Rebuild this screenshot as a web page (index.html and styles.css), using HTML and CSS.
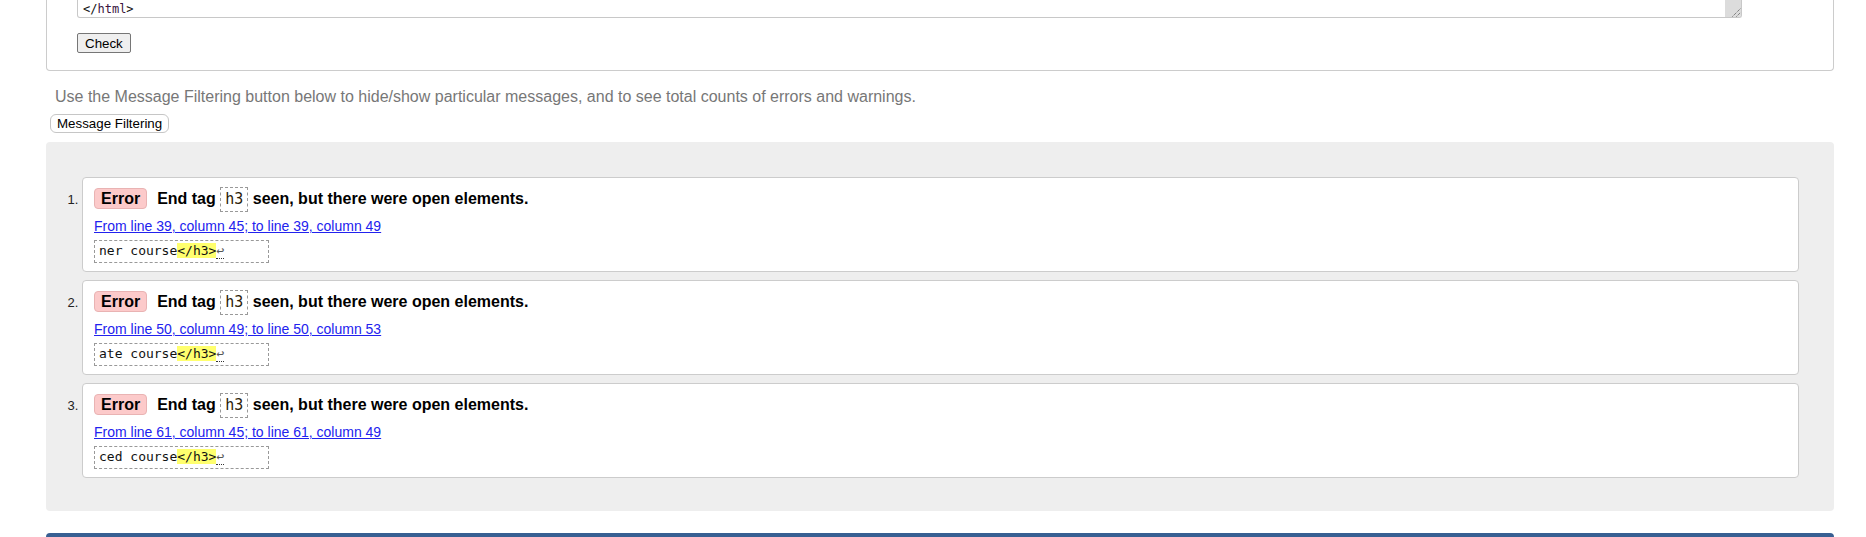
FILE: index.html
```html
<!DOCTYPE html>
<html lang="en">
<head>
<meta charset="utf-8">
<title>Nu Html Checker</title>
<link rel="stylesheet" href="styles.css">
</head>
<body>
<div class="page">
  <form class="check-form">
    <div class="source">
      <div class="source-line"><span class="punct">&lt;/</span><span class="tname">html</span><span class="punct">&gt;</span></div>
      <span class="grip"><svg width="16" height="17" viewBox="0 0 16 17"><path d="M7.5 16.5 L15.5 8.5 M11.5 16.5 L15.5 12.5" stroke="#555" stroke-width="1" stroke-dasharray="1 1" fill="none"/></svg></span>
    </div>
    <div class="submit-row"><button type="button" class="check-btn">Check</button></div>
  </form>
  <p class="hint">Use the Message Filtering button below to hide/show particular messages, and to see total counts of errors and warnings.</p>
  <button type="button" class="filter-btn">Message Filtering</button>
  <div class="results">
    <ol class="messages">
      <li class="msg">
        <p class="msg-head"><strong class="badge">Error</strong>End tag <code class="tag-code">h3</code> seen, but there were open elements.</p>
        <p class="location"><a href="#l39c45">From line 39, column 45; to line 39, column 49</a></p>
        <code class="extract">ner course<b>&lt;/h3&gt;</b><span class="lf">↩</span></code>
      </li>
      <li class="msg">
        <p class="msg-head"><strong class="badge">Error</strong>End tag <code class="tag-code">h3</code> seen, but there were open elements.</p>
        <p class="location"><a href="#l50c49">From line 50, column 49; to line 50, column 53</a></p>
        <code class="extract">ate course<b>&lt;/h3&gt;</b><span class="lf">↩</span></code>
      </li>
      <li class="msg">
        <p class="msg-head"><strong class="badge">Error</strong>End tag <code class="tag-code">h3</code> seen, but there were open elements.</p>
        <p class="location"><a href="#l61c45">From line 61, column 45; to line 61, column 49</a></p>
        <code class="extract">ced course<b>&lt;/h3&gt;</b><span class="lf">↩</span></code>
      </li>
    </ol>
  </div>
  <div class="footer-bar"></div>
</div>
</body>
</html>
```
FILE: styles.css
```css
* { box-sizing: border-box; }

html, body { overflow: hidden; }

body {
  margin: 0;
  background: #fff;
  color: #000;
  font-family: "Liberation Sans", Arial, sans-serif;
}

.page {
  padding: 0 32px 0 46px;
}

.check-form {
  border: 1px solid #ccc;
  border-top: none;
  border-radius: 0 0 4px 4px;
  padding: 0 91px 17px 30px;
}

.source {
  position: relative;
  height: 18px;
  border: 1px solid #c8c8c8;
  border-top: none;
  border-radius: 0 0 3px 3px;
  padding: 1px 5px 0;
  font: 12px/17px "DejaVu Sans Mono", monospace;
  color: #111;
}

.tname { color: #3a1540; }

.grip {
  position: absolute;
  right: 0;
  bottom: 0;
  width: 16px;
  height: 17px;
  background: #dcdcdc;
  border-radius: 0 0 2px 0;
}

.grip svg { display: block; }

.submit-row {
  margin-top: 15px;
  display: flex;
}

.check-btn {
  height: 20px;
  padding: 0 7px;
  font: 13.33px "Liberation Sans", Arial, sans-serif;
  color: #000;
  background: #efefef;
  border: 1px solid #767676;
  border-radius: 2px;
}

.hint {
  margin: 17px 0 0 9px;
  font-size: 16px;
  line-height: 18px;
  color: #777;
}

.filter-btn {
  display: block;
  margin: 8px 0 0 4px;
  height: 19px;
  padding: 0 6px;
  font: 13.33px "Liberation Sans", Arial, sans-serif;
  color: #000;
  background: #fff;
  border: 1px solid #c6c6c6;
  border-radius: 6px;
}

.results {
  margin-top: 9px;
  background: #eee;
  border-radius: 4px;
  padding: 35px 35px 33px 0;
}

.messages {
  margin: 0;
  padding: 0 0 0 36px;
}

.msg {
  background: #fff;
  border: 1px solid #ccc;
  border-radius: 4px;
  padding: 8px 11px;
  margin-bottom: 8px;
  font-size: 13px;
}

.msg:last-child { margin-bottom: 0; }

.msg::marker {
  font-size: 13px;
  color: #222;
}

.msg-head {
  margin: 0;
  height: 25px;
  font-size: 16px;
  line-height: 25px;
  font-weight: bold;
  white-space: nowrap;
}

.badge {
  display: inline-block;
  margin-right: 10px;
  padding: 0 6px;
  line-height: 19px;
  background: #fccaca;
  border: 1px solid #e9b3b3;
  border-radius: 4px;
}

.tag-code {
  display: inline-block;
  padding: 0 4px;
  font: 15px/23px "DejaVu Sans Mono", monospace;
  color: #2a1a08;
  border: 1px dashed #999;
}

.location {
  margin: 7px 0 0;
  font-size: 14px;
  line-height: 16px;
}

.location a { color: #2222ee; }

.extract {
  display: block;
  width: 175px;
  margin-top: 6px;
  padding: 2px 4px 3px;
  font: 13px/16px "DejaVu Sans Mono", monospace;
  color: #111;
  border: 1px dashed #999;
}

.extract b {
  font-weight: normal;
  background: #ffff6e;
}

.lf {
  color: #555;
  border-bottom: 1px dotted #333;
}

.footer-bar {
  margin-top: 22px;
  height: 40px;
  background: #385f92;
  border-radius: 4px 4px 0 0;
}
```
